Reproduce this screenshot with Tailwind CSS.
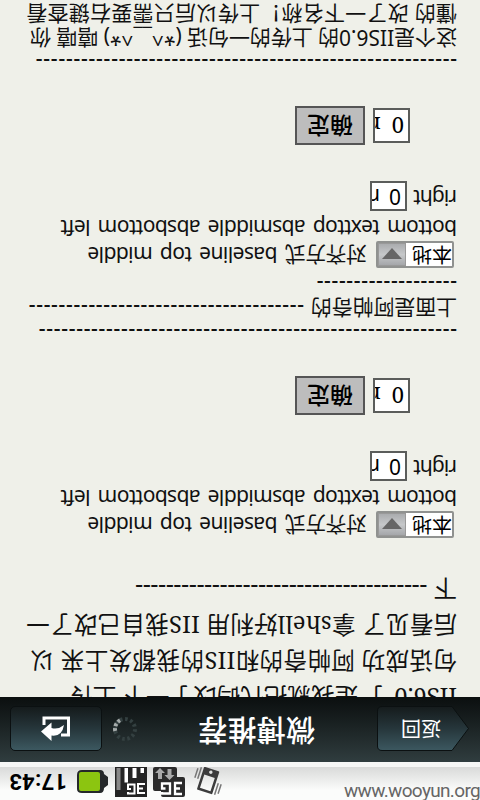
<!DOCTYPE html>
<html lang="zh">
<head>
<meta charset="utf-8">
<title>微博推荐</title>
<script src="https://cdn.jsdelivr.net/npm/@tailwindcss/browser@4"></script>
</head>
<body class="relative w-[480px] h-[800px] overflow-hidden bg-[#eff0e9]">
<div class="w-[480px] h-[800px] rotate-180 flex flex-col overflow-hidden bg-[#eff0e9] text-[#111] whitespace-nowrap font-['Noto_Sans','Noto_Sans_CJK_SC',sans-serif]">

  <!-- status bar -->
  <div class="h-[38px] shrink-0 bg-linear-to-b from-[#fbfcfb] from-30% to-[#d9dad9] border-b-5 border-[#f6f7f6] flex items-start pl-[256px]">
    <svg class="shrink-0" width="155" height="33" viewBox="256 0 155 33">
      <g transform="rotate(18 272 19)">
        <path fill-rule="evenodd" d="M265 7.500h14q1 0 1 1v22q0 1-1 1h-14q-1 0-1-1v-22q0-1 1-1zM266.500 10v14h11V10zM272 26.500a1.700 1.700 0 1 0 .1 0z" fill="#3c3c3c"/>
        <path d="M261.500 8v12M258.500 10v10M282.500 18v12M285.500 18v10" stroke="#777" stroke-width="1.500"/>
      </g>
      <path d="M297 3h20q2 0 2 2v4h6q2 0 2 2v20q0 2-2 2h-20q-2 0-2-2v-8h-6q-2 0-2-2V5q0-2 2-2z" fill="#2b2b2b"/>
      <path d="M298 6h7v11h-7M300 11.500h5M318 8V6.500h-8v10h8v-5h-3.500" fill="none" stroke="#fff" stroke-width="2.300"/>
      <path d="M310.500 20l-5 5h3v6h4v-6h3zM320 32l5-5h-3v-6h-4v6h-3z" fill="#aaa"/>
      <path d="M333 3h32v30h-32z" fill="#242424"/>
      <path d="M335 7h7v9h-7M337 11.500h5M352 8V6.500h-6.500v9h6.500v-4.500h-3" fill="none" stroke="#fff" stroke-width="2"/>
      <path d="M336 27h3.500v5h-3.500zM343.500 22h4v10h-4zM352 17.500h3.500v14.500h-3.500z" fill="#fff"/><path d="M359.500 10h4v22h-4z" fill="#888"/>
      <path d="M372 15l4-3q0-5 4-5h18q5 0 5 4v14q0 5-5 5h-18q-4 0-4-4l-4-3z" fill="#25282a"/>
      <rect x="380" y="9" width="21" height="19" rx="2" fill="#8cc510"/>
    </svg>
    <div class="pt-[5px] ml-[2px] leading-7 text-[22px] font-bold text-black font-[Roboto,sans-serif]"><span data-w="58" class="inline-block">17:43</span></div>
  </div>

  <!-- title bar -->
  <div class="h-[65px] shrink-0 flex items-start pt-[11px] pl-[11px] bg-linear-to-b from-[#303d3f] to-[#0b0f0f] text-white relative z-10">
    <div class="relative w-[92px] h-[45px] shrink-0">
      <svg class="absolute inset-0" width="92" height="45" viewBox="0 0 92 45">
        <defs><linearGradient id="g" x1="0" y1="0" x2="0" y2="1"><stop offset="0" stop-color="#3c5860"/><stop offset=".5" stop-color="#26363b"/><stop offset="1" stop-color="#151b1c"/></linearGradient></defs>
        <path d="M17 .5H87q4.500 0 4.500 4.500V40q0 4.500-4.500 4.500H17L.5 22.500z" fill="url(#g)" stroke="#0b1011"/>
      </svg>
      <div class="relative pl-[28px] leading-[45px] text-[20px]">返回</div>
    </div>
    <div class="ml-[62px] w-[118px] leading-[42px] text-[29px] font-medium"><span data-w="117" class="inline-block">微博推荐</span></div>
    <svg class="ml-[59px] mt-[9px] shrink-0" width="26" height="26" viewBox="-13 -13 26 26" fill="none" stroke-width="4">
      <circle r="10" stroke="#344041" stroke-dasharray="2.600 2.636"/>
      <path d="M9.800-2A10 10 0 0 1 4 9.200" stroke="#a5abab" stroke-dasharray="2.800 2"/>
    </svg>
    <div class="ml-[10px] w-[92px] h-[45px] shrink-0 rounded-[5px] border border-[#0b1011] bg-linear-to-b from-[#3c5860] via-[#26363b] to-[#151b1c] flex justify-center items-center">
      <svg width="32" height="26" viewBox="0 0 32 26"><path d="M11 6H3.500V23H28V16" fill="none" stroke="#fff" stroke-width="3"/><path d="M31 9.500L20.500 0V5.500Q10 4 8 16Q14 11 20.500 13V18.500z" fill="#fff"/></svg>
    </div>
  </div>

  <!-- article -->
  <div class="pl-[23px] flex-1 min-h-0 overflow-hidden text-[21px]">
    <div class="-mt-[18px] h-[177px] text-[23.500px] leading-[36px] font-['Noto_Serif','DejaVu_Serif_Condensed','Liberation_Serif','Noto_Sans_CJK_SC',serif]">
      <div class="h-9"><span data-w="388" class="inline-block">IIS6.0 了 是我就把代码改了一下 上传</span></div>
      <div class="h-9"><span data-w="427" class="inline-block">句话成功 阿帕奇的和IIS的我都发上来 以</span></div>
      <div class="h-9"><span data-w="431" class="inline-block">后看见了 拿shell好利用 IIS我自己改了一</span></div>
      <div class="h-9 flex"><span class="w-[30px]">下</span><span data-w="292" class="font-medium">--------------------------------------</span></div>
    </div>

    <div class="h-[27px] leading-[27px] flex">
      <div class="ml-[3px] w-[78px] h-[27px] border-2 border-[#909290] rounded-[2px] bg-white text-black flex justify-between">
        <span class="leading-[23px] text-[20px]">本地</span>
        <div class="w-[28px] flex items-center justify-center bg-linear-to-b from-[#a5a7aa] via-[#c6c8ca] to-[#aaacae] border border-[#999]"><svg width="20" height="12" viewBox="0 0 20 12"><path d="M0 1h20l-10 11z" fill="#666"/></svg></div>
      </div>
      <span class="ml-[9px]"><span data-w="279" class="inline-block [word-spacing:3px]">对齐方式 baseline top middle</span></span>
    </div>
    <div class="h-[27px] leading-[27px]"><span data-w="396" class="inline-block [word-spacing:3px]">bottom texttop absmiddle absbottom left</span></div>
    <div class="h-[33px] pt-[3px] flex">
      <span class="w-[50px] shrink-0 leading-[27px]"><span data-w="43" class="inline-block">right</span></span>
      <div class="w-[37px] h-[30px] border-2 border-[#5b5d5b] bg-white text-black overflow-hidden leading-[25px] pl-[4px]">0<span class="ml-[9px]">r</span></div>
    </div>
    <div class="h-[71px] mt-[36px] pl-[47px] flex items-start">
      <div class="mt-[2px] w-[37px] h-[35px] border-2 border-[#5b5d5b] bg-white text-black overflow-hidden leading-[30px] text-[22px] pl-[4px] font-['Noto_Serif',serif]">0<span class="ml-[11px]">r</span></div>
      <div class="ml-[8px] w-[70px] h-[39px] border-2 border-[#555] bg-[#bdbdbd] text-black text-[23px] leading-[34px] text-center font-medium">确定</div>
    </div>
    <div class="h-6 leading-6"><span data-w="419" class="inline-block font-medium">--------------------------------------------------------</span></div>
    <div class="h-6 leading-6 flex"><span class="w-[153px]"><span data-w="146" class="inline-block">上面是阿帕奇的</span></span><span data-w="276" class="font-medium">-------------------------------------</span></div>
    <div class="h-6 leading-6"><span data-w="141" class="inline-block font-medium">-------------------</span></div>

    <div class="mt-[4px] h-[27px] leading-[27px] flex">
      <div class="ml-[3px] w-[78px] h-[27px] border-2 border-[#909290] rounded-[2px] bg-white text-black flex justify-between">
        <span class="leading-[23px] text-[20px]">本地</span>
        <div class="w-[28px] flex items-center justify-center bg-linear-to-b from-[#a5a7aa] via-[#c6c8ca] to-[#aaacae] border border-[#999]"><svg width="20" height="12" viewBox="0 0 20 12"><path d="M0 1h20l-10 11z" fill="#666"/></svg></div>
      </div>
      <span class="ml-[9px]"><span data-w="279" class="inline-block [word-spacing:3px]">对齐方式 baseline top middle</span></span>
    </div>
    <div class="h-[27px] leading-[27px]"><span data-w="396" class="inline-block [word-spacing:3px]">bottom texttop absmiddle absbottom left</span></div>
    <div class="h-[33px] pt-[3px] flex">
      <span class="w-[50px] shrink-0 leading-[27px]"><span data-w="43" class="inline-block">right</span></span>
      <div class="w-[37px] h-[30px] border-2 border-[#5b5d5b] bg-white text-black overflow-hidden leading-[25px] pl-[4px]">0<span class="ml-[9px]">r</span></div>
    </div>
    <div class="h-[71px] mt-[36px] pl-[47px] flex items-start">
      <div class="mt-[2px] w-[37px] h-[35px] border-2 border-[#5b5d5b] bg-white text-black overflow-hidden leading-[30px] text-[22px] pl-[4px] font-['Noto_Serif',serif]">0<span class="ml-[11px]">r</span></div>
      <div class="ml-[8px] w-[70px] h-[39px] border-2 border-[#555] bg-[#bdbdbd] text-black text-[23px] leading-[34px] text-center font-medium">确定</div>
    </div>
    <div class="h-6 leading-6"><span data-w="422" class="inline-block font-medium">--------------------------------------------------------</span></div>
    <div class="h-6 leading-6"><span data-w="427" class="inline-block">这个是IIS6.0的 上传的一句话 (*^__^*) 嘻嘻 你</span></div>
    <div class="h-6 leading-6"><span data-w="431" class="inline-block">懂的 改了一下名称！上传以后只需要右键查看</span></div>
  </div>
</div>
<div class="absolute left-[344px] top-[779px] leading-6 text-[19px] text-[#666] font-[Roboto,sans-serif] whitespace-nowrap"><span data-w="136" class="inline-block">www.wooyun.org</span></div>
<script>
// Spread each line's letters so that it fills its measured width.
function fit() {
  for (const el of document.querySelectorAll('[data-w]')) {
    el.style.letterSpacing = '0px';
    const range = document.createRange();
    range.selectNodeContents(el);
    const w = range.getBoundingClientRect().width;
    el.style.letterSpacing = (el.dataset.w - w) / el.textContent.length + 'px';
  }
}
fit();
addEventListener('load', () => { fit(); requestAnimationFrame(fit); });
document.fonts.ready.then(fit);
</script>
</body>
</html>
